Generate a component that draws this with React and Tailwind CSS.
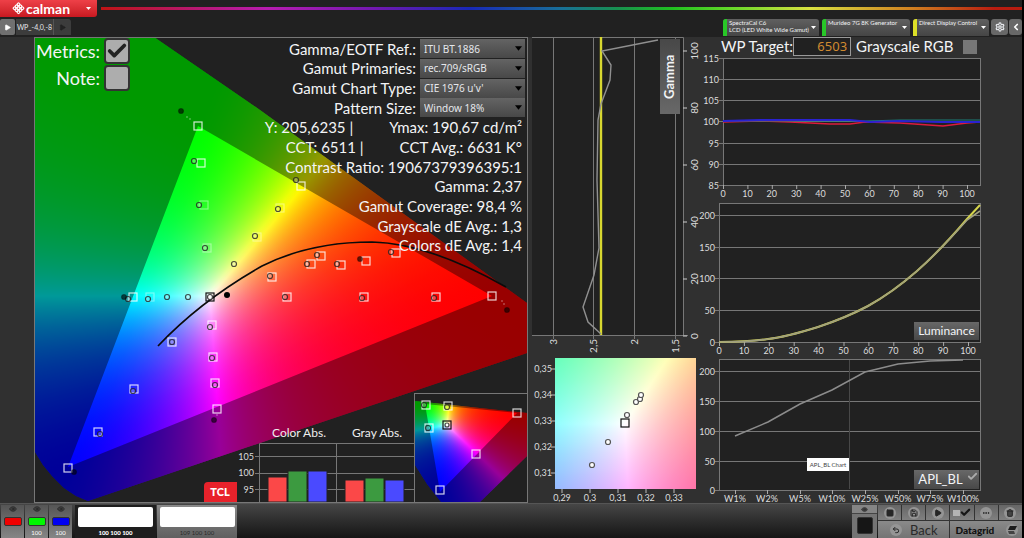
import React, { useState } from "react";
import { Check, ChevronLeft, Eye, MoreHorizontal, Play, Save, Settings, Square, Trash2, Undo2 } from "lucide-react";
import clsx from "clsx";

// signed distance-like value of p from the edge a-b
const side = (p, a, b) => (b[0] - a[0]) * (p[1] - a[1]) - (b[1] - a[1]) * (p[0] - a[0]);

// The ratio of two primaries is constant along every ray that leaves the third one,
// so each pair is a conic gradient and the darkest of the three is the colour.
const conic = (from, a, b, white, box, channels, step) => {
    const stops = [];
    for (let deg = 0; deg <= 360; deg += step) {
        const rad = (deg * Math.PI) / 180;
        const p = [from[0] + Math.sin(rad) * 100, from[1] - Math.cos(rad) * 100];
        const wa = side(p, from, b) / side(white, from, b);
        const wb = side(p, from, a) / side(white, from, a);
        const level = (x, y) => {
            if (x <= 0) return 0;
            if (y <= 0) return 255;
            return Math.round(255 * Math.pow(Math.min(1, x / y), 1.4));
        };
        const rgb = [255, 255, 255];
        rgb[channels[0]] = level(wa, wb);
        rgb[channels[1]] = level(wb, wa);
        stops.push(`rgb(${rgb.join(",")}) ${deg}deg`);
    }
    return `conic-gradient(from 0deg at ${from[0] - box[0]}px ${from[1] - box[1]}px, ${stops.join(",")})`;
};

const ColorField = ({ box, r, g, b, white, outline, step = 1 }) => {
    const background = [
        conic(b, r, g, white, box, [0, 1], step),
        conic(g, r, b, white, box, [0, 2], step),
        conic(r, g, b, white, box, [1, 2], step),
    ].join(",");
    const clipPath = outline
        ? `polygon(${outline.map(([x, y]) => `${x - box[0]}px ${y - box[1]}px`).join(",")})`
        : undefined;
    return (
        <foreignObject x={box[0]} y={box[1]} width={box[2]} height={box[3]}>
            <div className="h-full w-full bg-white" style={{ background, backgroundBlendMode: "darken", clipPath }} />
        </foreignObject>
    );
};

const toPath = (points) => "M" + points.map((p) => p.join(" ")).join("L");

const Squares = ({ points, size = 8, stroke = "#ffffffd0" }) =>
    points.map(([x, y], i) => (
        <rect key={i} x={x - size / 2} y={y - size / 2} width={size} height={size} fill="none" stroke={stroke} strokeWidth="1.2" />
    ));

const Circles = ({ points, r = 2.5, fill = "#ffffff40", stroke = "#222c" }) =>
    points.map(([x, y], i) => <circle key={i} cx={x} cy={y} r={r} fill={fill} stroke={stroke} strokeWidth="1.2" />);

const mainLocus = [
    [35, 37], [154, 37], [260, 110], [473, 264], [527, 303], [527, 353], [88, 501],
    [76, 496], [64, 488], [52, 476], [43, 465], [35, 452],
];
const targets = [
    [198, 126], [201, 163], [133, 297], [301, 186], [321, 256], [311, 264], [341, 265], [366, 261], [396, 253],
    [272, 277], [287, 297], [364, 297], [436, 297], [492, 296], [212, 325], [213, 357], [215, 383], [217, 409],
    [172, 342], [134, 389], [98, 432], [68, 468],
];
const faintTargets = [[204, 205], [207, 248], [280, 208], [150, 297], [257, 237]];
const readings = [
    [194, 161], [199, 205], [205, 248], [255, 236], [234, 264], [278, 209], [296, 180], [317, 255], [307, 264],
    [337, 264], [391, 252], [270, 276], [285, 297], [362, 298], [434, 298], [128, 299], [148, 299], [167, 297],
    [188, 297], [210, 327], [212, 358], [215, 385], [172, 342], [133, 391], [100, 434],
];
const darkReadings = [[181, 111], [360, 259], [507, 310], [124, 297], [214, 420], [74, 472]];

const GamutChart = () => (
    <svg viewBox="34 37 494 466" className="block w-full">
        <rect x="34" y="37" width="494" height="466" fill="#212121" />
        <ColorField box={[35, 38, 492, 464]} r={[492, 296]} g={[198, 126]} b={[68, 467]} white={[210, 296]} outline={mainLocus} />
        <path
            d={`${toPath(mainLocus)}ZM198 126L492 296L68 467Z`}
            fill="#000"
            fillOpacity="0.4"
            fillRule="evenodd"
        />
        <path d="M158 346C190 312 225 287 262 266C300 247 340 242 372 242C415 243 462 262 506 287" fill="none" stroke="#0b0b0b" strokeWidth="1.6" />
        <Squares points={targets} />
        <Squares points={faintTargets} stroke="#ffffff66" />
        <Circles points={readings} />
        <Circles points={darkReadings} fill="#0009" stroke="#0005" />
        <Circles points={[[187, 117], [190, 119], [502, 301], [504, 304], [217, 415]]} r={0.7} fill="#ffffff99" stroke="none" />
        <Squares points={[[210, 297]]} stroke="#111" />
        <Circles points={[[210, 297]]} fill="#fff" stroke="#444" />
        <circle cx="227" cy="295" r="3" fill="#000" />

        {/* dE bars */}
        <path d="M259.5 502V443.5H414.5M336.5 443.5V502M255 456.5H414M255 473.5H414M255 489.5H414" fill="none" stroke="#777" />
        <g fill="#ddd" fontSize="9" textAnchor="end">
            <text x="254" y="460">105</text>
            <text x="254" y="476">100</text>
            <text x="254" y="493">95</text>
        </g>
        <g fill="#eee" fontSize="12" textAnchor="middle">
            <text x="299" y="437">Color Abs.</text>
            <text x="377" y="437">Gray Abs.</text>
        </g>
        {[[268, 477, "#fb4848"], [288, 471, "#3c9a40"], [308, 471, "#4a4aff"], [345, 480, "#fb4848"], [365, 478, "#3c9a40"], [385, 480, "#4a4aff"]].map(
            ([x, y, fill]) => <rect key={x} x={x} y={y} width="19" height={502 - y} fill={fill} stroke="#222" />
        )}

        {/* brand badge */}
        <path d="M208 482H237V502H204V486Q204 482 208 482Z" fill="#e8222b" />
        <text x="220" y="496" fill="#fff" fontSize="11" fontWeight="900" textAnchor="middle">TCL</text>

        {/* small gamut inset */}
        <rect x="414.5" y="393.5" width="113" height="109" fill="#212121" stroke="#777" />
        <ColorField
            box={[415, 394, 112, 108]}
            r={[517, 413]}
            g={[425, 404]}
            b={[440, 492]}
            white={[447, 425]}
            outline={[[415, 401], [527, 413], [527, 456], [480, 502], [441, 502], [427, 484], [415, 465]]}
        />
        <path
            d="M415 401L527 413V456L480 502H441L427 484L415 465ZM425 404L517 413L440 492Z"
            fill="#000"
            fillOpacity="0.4"
            fillRule="evenodd"
        />
        <Squares points={[[426, 405], [448, 406], [429, 428], [517, 413], [476, 454], [440, 490]]} />
        <Circles points={[[424, 405], [447, 407], [428, 428]]} />
        <Squares points={[[447, 425]]} stroke="#111" />
        <Circles points={[[447, 425]]} r={2} fill="#fff" stroke="#444" />
        <rect x="34.5" y="37.5" width="493" height="465" fill="none" stroke="#777" />
    </svg>
);

const GammaChart = () => (
    <svg viewBox="528 37 172 320" className="block w-full">
        <rect x="532" y="37" width="151" height="298" fill="#212121" />
        <path d="M532 37.5H683.5V335M532 335.5H688M553.5 37V339M593.5 37V339M634.5 37V339M675.5 37V339" fill="none" stroke="#777" />
        {[100, 80, 60, 40, 20, 0].map((v, i) => {
            const y = 51 + i * 57;
            return (
                <g key={v}>
                    <path d={`M683 ${y}H687`} stroke="#ccc" />
                    <text transform={`translate(698 ${y}) rotate(-90)`} textAnchor="middle" fontSize="10" fill="#ddd">{v}</text>
                </g>
            );
        })}
        {[["3", 553], ["2,5", 593], ["2", 634], ["1,5", 675]].map(([v, x]) => (
            <text key={v} transform={`translate(${x + 4} 339) rotate(-90)`} textAnchor="end" fontSize="10" fill="#ddd">{v}</text>
        ))}
        <path d="M601 37V335" stroke="#d8d830" strokeWidth="2.4" />
        <path
            d="M658 40L602 51L611 65L610 80L601 104L598 120L597 180L599 248L594 275L583 307L588 322L601 334"
            fill="none"
            stroke="#909090"
            strokeWidth="1.4"
        />
    </svg>
);

const WhitePointChart = () => (
    <svg viewBox="528 357 172 146" className="block w-full">
        <ColorField box={[555, 358, 141, 131]} r={[1553, 420]} g={[591, -281]} b={[167, 1122]} white={[625, 423]} step={0.25} />
        {[["0,35", 369], ["0,34", 395], ["0,33", 421], ["0,32", 447], ["0,31", 473]].map(([v, y]) => (
            <g key={v}>
                <path d={`M551 ${y}H555`} stroke="#bbb" />
                <text x="552" y={y + 3} textAnchor="end" fontSize="9" fill="#ddd">{v}</text>
            </g>
        ))}
        {[["0,29", 562], ["0,3", 590], ["0,31", 618], ["0,32", 646], ["0,33", 674]].map(([v, x]) => (
            <g key={v}>
                <path d={`M${x} 489V493`} stroke="#bbb" />
                <text x={x} y="501" textAnchor="middle" fontSize="9" fill="#ddd">{v}</text>
            </g>
        ))}
        <Circles points={[[592, 465], [608, 442], [627, 415], [636, 402], [640, 399], [641, 395]]} fill="#fff" stroke="#555" />
        <Squares points={[[625, 423]]} stroke="#111" />
    </svg>
);

// plot frame with horizontal grid lines, ticks and both sets of labels
const Plot = ({ viewBox, left, top, bottom, rows, cols, children }) => (
    <svg viewBox={viewBox} className="block w-full overflow-visible">
        <rect x={left + 0.5} y={top + 0.5} width={980 - left} height={bottom - top} fill="#212121" stroke="#777" />
        {rows.map(([v, y]) => (
            <g key={v}>
                <path d={`M${left - 4} ${y + 0.5}H980`} stroke="#777" />
                <text x={left - 4} y={y + 4} textAnchor="end" fontSize="9" fill="#ddd">{v}</text>
            </g>
        ))}
        {cols.map(([v, x]) => (
            <g key={v}>
                <path d={`M${x + 0.5} ${bottom}V${bottom + 4}`} stroke="#aaa" />
                <text x={x} y={bottom + 12} textAnchor="middle" fontSize="9" fill="#ddd">{v}</text>
            </g>
        ))}
        {children}
    </svg>
);

const tens = [0, 10, 20, 30, 40, 50, 60, 70, 80, 90, 100];

const GrayscaleChart = () => (
    <Plot
        viewBox="700 56 322 144"
        left={723}
        top={58}
        bottom={185}
        rows={[[115, 58], [110, 79], [105, 100], [100, 121], [95, 143], [90, 164], [85, 185]]}
        cols={tens.map((v) => [v, 723 + v * 2.44])}
    >
        <path d="M723 122L760 121L790 122L830 124H850L865 122L900 123L943 126L967 123L980 122" fill="none" stroke="#dc1c3c" strokeWidth="1.4" />
        <path d="M723 121H865L900 120H980" fill="none" stroke="#1c8078" strokeWidth="1.2" />
        <path d="M723 121L760 120H850L870 122L900 121L940 122L980 122" fill="none" stroke="#2a22d0" strokeWidth="1.8" />
    </Plot>
);

const LuminanceChart = () => (
    <Plot
        viewBox="700 200 322 157"
        left={719}
        top={203}
        bottom={342}
        rows={[[200, 215], [150, 247], [100, 278], [50, 310], [0, 342]]}
        cols={tens.map((v) => [v, 719 + v * 2.49])}
    >
        <path
            d="M719 342C735 342 755 341 768 339C786 337 802 332 818 327C836 321 853 314 868 306C886 296 901 285 917 271C934 256 950 239 967 219L980 205"
            fill="none"
            stroke="#d4d44c"
            strokeWidth="2"
        />
        <path
            d="M719 342C735 342 755 341 768 339C786 337 802 332 818 327C836 321 853 314 868 306C886 296 901 285 917 271C934 256 950 239 967 220L980 211"
            fill="none"
            stroke="#a0a080"
            strokeWidth="1.6"
        />
    </Plot>
);

const AplChart = () => (
    <Plot
        viewBox="700 357 322 146"
        left={719}
        top={359}
        bottom={490}
        rows={[[200, 371], [150, 401], [100, 431], [50, 461], [0, 490]]}
        cols={[["W1%", 735], ["W2%", 767], ["W5%", 800], ["W10%", 832], ["W25%", 865], ["W50%", 898], ["W75%", 930], ["W100%", 963]]}
    >
        <path d="M849.5 360V489" stroke="#484848" />
        <path d="M735 436L768 422L800 404L832 390L865 372L898 364L930 361L963 360" fill="none" stroke="#8c8c8c" strokeWidth="1.5" />
    </Plot>
);

const settings = [
    ["Gamma/EOTF Ref.:", "ITU BT.1886"],
    ["Gamut Primaries:", "rec.709/sRGB"],
    ["Gamut Chart Type:", "CIE 1976 u'v'"],
    ["Pattern Size:", "Window 18%"],
];

const metrics = [
    ["Y: 205,6235 |", "Ymax: 190,67 cd/m²"],
    ["CCT: 6511 |", "CCT Avg.: 6631 K°"],
    ["Contrast Ratio: 19067379396395:1"],
    ["Gamma: 2,37"],
    ["Gamut Coverage: 98,4 %"],
    ["Grayscale dE Avg.: 1,3"],
    ["Colors dE Avg.: 1,4"],
];

const Caret = ({ className }) => (
    <svg viewBox="0 0 8 5" className={clsx("pointer-events-none h-[5px]", className)}>
        <path d="M0 0H8L4 5Z" fill="currentColor" />
    </svg>
);

const SettingsPanel = () => (
    <div className="absolute top-[2px] right-[3px] grid h-[216px] auto-rows-fr text-[15px] text-gray-100">
        {settings.map(([label, value]) => (
            <label key={label} className="flex items-center justify-end gap-1 leading-[18px]">
                {label}
                <span className="relative block h-[19px] w-[105px]">
                    <select className="block h-full w-full appearance-none bg-linear-to-b from-[#646464] to-[#484848] px-1 font-['Noto_Sans',sans-serif] text-[10px] text-gray-200">
                        <option>{value}</option>
                    </select>
                    <Caret className="absolute top-[7px] right-[3px] w-[7px] text-black" />
                </span>
            </label>
        ))}
        {metrics.map((row) => (
            <p key={row[0]} className="flex items-center justify-end gap-9 pr-[3px] leading-[18px] whitespace-nowrap">
                {row.map((text) => (
                    <span key={text}>{text}</span>
                ))}
            </p>
        ))}
    </div>
);

const CheckField = ({ label, checked, onChange }) => (
    <label className="flex items-center justify-end gap-1 text-[18px] leading-[24px] text-gray-100">
        {label}
        <span className="relative block size-[26px]">
            <input
                type="checkbox"
                checked={checked}
                onChange={onChange}
                className="block size-full appearance-none rounded-[4px] border-2 border-[#333] bg-[#adadad]"
            />
            {checked && <Check className="pointer-events-none absolute top-[2px] left-[2px] size-[22px] text-[#222]" strokeWidth={4} />}
        </span>
    </label>
);

const DeviceTab = ({ lines, bar, className }) => (
    <button className={clsx("flex h-[17px] items-stretch overflow-hidden rounded-t-[3px] bg-linear-to-b from-[#606060] to-[#454545] text-left", className)}>
        <span className={clsx("w-[4px]", bar)} />
        <span className="flex-1 pl-[2px] text-[6px] leading-[7px] whitespace-nowrap text-gray-100">
            {lines.map((line) => (
                <span key={line} className="block">{line}</span>
            ))}
        </span>
        <span className="mr-[3px] flex items-center">
            <Caret className="w-[5px] text-white" />
        </span>
    </button>
);

const Header = () => (
    <header className="bg-[#212121]">
        <div className="flex h-[17px] items-center gap-1">
            <button className="flex h-full w-[97px] items-center rounded-br-[3px] bg-linear-to-b from-[#ee4048] to-[#c81820] pl-3 text-white">
                <svg viewBox="0 0 14 14" className="size-[13px]">
                    <g transform="rotate(45 7 7)" fill="none" stroke="#fff" strokeWidth="1.2">
                        {[3, 6, 9].map((x) => [3, 6, 9].map((y) => <rect key={`${x}-${y}`} x={x - 0.5} y={y - 0.5} width="2.6" height="2.6" rx="0.8" />))}
                    </g>
                </svg>
                <span className="ml-px text-[14px] leading-[15px] font-bold">calman</span>
                <Caret className="ml-auto mr-[6px] w-[5px]" />
            </button>
            <div className="h-[3px] flex-1 bg-[linear-gradient(to_right,#c01414_0%,#b81870_10%,#b81cb0_18%,#7018b0_30%,#1828b8_40%,#187098_50%,#189050_56%,#20c020_62%,#60d828_68%,#d8e040_77%,#d08020_88%,#b81c10_97%)]" />
        </div>
        <div className="flex h-[20px] items-start pt-[2px]">
            <button aria-label="Layouts" className="flex h-[16px] w-[15px] items-center justify-center rounded-[2px] bg-[#707070]">
                <Play className="size-[7px] fill-white text-white" />
            </button>
            <button className="ml-px h-[16px] w-[38px] border-r border-[#555] bg-[#3c3c3c] text-[7px] text-gray-200">WP_-4,0,-8</button>
            <button aria-label="Next layout" className="flex h-[16px] w-[17px] items-center justify-center rounded-tr-[3px] bg-[#3c3c3c]">
                <Play className="size-[7px] fill-[#222] text-[#222]" />
            </button>
            <div className="ml-auto flex gap-[3px]">
                <DeviceTab className="w-[96px]" bar="bg-[#28c828]" lines={["SpectraCal C6", "LCD (LED White Wide Gamut)"]} />
                <DeviceTab className="w-[88px]" bar="bg-[#28c828]" lines={["Murideo 7G 8K Generator"]} />
                <DeviceTab className="w-[76px]" bar="bg-[#dce028]" lines={["Direct Display Control"]} />
            </div>
            <div className="ml-[2px] flex gap-px">
                <button aria-label="Settings" className="flex h-[16px] w-[17px] items-center justify-center rounded-[3px] bg-[#686868]">
                    <Settings className="size-[10px] text-gray-200" strokeWidth={3} />
                </button>
                <button aria-label="Collapse" className="flex h-[16px] w-[13px] items-center justify-center rounded-[3px] bg-[#686868]">
                    <ChevronLeft className="size-[10px] text-white" strokeWidth={4} />
                </button>
            </div>
        </div>
    </header>
);

const Swatch = ({ color, label }) => (
    <button className="flex h-[33px] w-[23px] flex-col items-center bg-linear-to-b from-[#555] to-[#868686]">
        <Eye className="size-[8px] fill-[#444] text-[#222]" />
        <span className={clsx("mt-[4px] h-[9px] w-[18px] rounded-[2px] border border-[#333]", color)} />
        <span className="mt-[3px] text-[6px] leading-[8px] text-white">{label}</span>
    </button>
);

const RoundIcon = ({ icon: Icon, className }) => (
    <span className="flex size-[12px] items-center justify-center rounded-full bg-[#959595]">
        <Icon className={clsx("size-[8px] text-[#262626]", className)} strokeWidth={3} />
    </span>
);

const ToolButton = ({ icon, label, className }) => (
    <button aria-label={label} className="flex h-[15px] items-center justify-center bg-linear-to-b from-[#666] to-[#808080]">
        <RoundIcon icon={icon} className={className} />
    </button>
);

const Footer = () => (
    <footer className="flex h-[35px] items-end border-t border-[#555] bg-linear-to-b from-[#464646] to-[#161616]">
        <div className="ml-px flex gap-px">
            <Swatch color="bg-[#f00000]" label="" />
            <Swatch color="bg-[#00f800]" label="100" />
            <Swatch color="bg-[#0000f0]" label="100" />
        </div>
        <button className="ml-[3px] flex h-[33px] w-[81px] flex-col items-center bg-[#1e1e1e] pt-[2px]">
            <span className="h-[20px] w-[75px] rounded-[2px] bg-white" />
            <span className="mt-[2px] text-[6px] leading-[8px] font-black text-white">100 100 100</span>
        </button>
        <button className="ml-px flex h-[33px] w-[80px] flex-col items-center bg-linear-to-b from-[#8a8a8a] to-[#606060] pt-[2px]">
            <span className="h-[20px] w-[75px] rounded-[2px] bg-white" />
            <span className="mt-[2px] text-[6px] leading-[8px] text-[#2a2a2a]">109 100 100</span>
        </button>
        <div className="ml-auto flex gap-px">
            <div className="w-[25px] bg-[#747474]">
                <button aria-label="Show pattern" className="flex h-[9px] w-full items-center justify-center border-b border-[#444] bg-[#858585]">
                    <Eye className="size-[7px] fill-[#444] text-[#333]" />
                </button>
                <div className="mx-auto mt-[3px] mb-[4px] h-[17px] w-[16px] rounded-[2px] border border-[#333] bg-[#161616]" />
            </div>
            <div className="grid w-[144px] grid-cols-6 gap-px bg-[#333]">
                <ToolButton icon={Square} label="Stop" className="size-[5px] fill-[#262626]" />
                <ToolButton icon={Save} label="Save" />
                <ToolButton icon={Play} label="Play" className="fill-[#262626]" />
                <button aria-label="Confirm" className="flex h-[15px] items-center justify-center bg-linear-to-b from-[#666] to-[#808080]">
                    <span className="h-[6px] w-[7px] bg-[#b4b4b4]" />
                    <Check className="size-[11px] text-[#161616]" strokeWidth={5} />
                </button>
                <ToolButton icon={MoreHorizontal} label="More" />
                <ToolButton icon={Trash2} label="Delete" className="fill-[#444]" />
                <button className="col-span-3 flex h-[17px] items-center justify-center gap-2 bg-linear-to-b from-[#8a8a8a] to-[#747474] text-[13px] leading-[16px] text-[#2a2a2a]">
                    <RoundIcon icon={Undo2} />
                    Back
                </button>
                <button className="col-span-3 flex h-[17px] items-center justify-between bg-linear-to-b from-[#8a8a8a] to-[#747474] pr-1 pl-[5px] text-[10px] leading-[16px] font-black text-[#111]">
                    Datagrid
                    <span className="flex size-[12px] items-center justify-center rounded-full bg-[#959595]">
                        <svg viewBox="0 0 10 8" className="h-[8px] w-[10px]">
                            <path d="M3 0H10L8 4H1Z" fill="#1c1c1c" />
                            <path d="M1 5H7L8 8H2Z" fill="#444" />
                        </svg>
                    </span>
                </button>
            </div>
        </div>
    </footer>
);

const chartButton = "absolute flex items-center justify-center bg-linear-to-b from-[#686868] to-[#484848] text-gray-100";

const App = () => {
    const [showMetrics, setShowMetrics] = useState(true);
    const [showNote, setShowNote] = useState(false);

    return (
        <div className="min-h-screen border-r-2 border-black bg-[#303030] font-['Lato',sans-serif]">
            <Header />
            <main className="grid grid-cols-[34fr_494fr_172fr_322fr]">
                <div />
                <section className="relative">
                    <GamutChart />
                    <div className="absolute top-[1px] left-[2px] grid gap-px">
                        <CheckField label="Metrics:" checked={showMetrics} onChange={() => setShowMetrics(!showMetrics)} />
                        <CheckField label="Note:" checked={showNote} onChange={() => setShowNote(!showNote)} />
                    </div>
                    <SettingsPanel />
                </section>
                <section>
                    <div className="relative">
                        <GammaChart />
                        <button className={clsx(chartButton, "top-[2px] right-[20px] h-[75px] w-[20px] rotate-180 text-[13px] font-bold [writing-mode:vertical-rl]")}>
                            Gamma
                        </button>
                    </div>
                    <WhitePointChart />
                </section>
                <section>
                    <form className="flex h-[19px] items-center pl-[21px] text-[15px] text-gray-100">
                        <label htmlFor="wp-target" className="whitespace-nowrap">WP Target:</label>
                        <input
                            id="wp-target"
                            defaultValue="6503"
                            className="h-[19px] w-[58px] border border-[#999] bg-[#212121] pr-[3px] text-right font-['Noto_Sans',sans-serif] text-[13px] text-[#d08a30]"
                        />
                        <label htmlFor="grayscale-rgb" className="ml-[5px] whitespace-nowrap">Grayscale RGB</label>
                        <input id="grayscale-rgb" type="checkbox" className="ml-[9px] size-[14px] appearance-none bg-[#777]" />
                    </form>
                    <GrayscaleChart />
                    <div className="relative">
                        <LuminanceChart />
                        <button className={clsx(chartButton, "right-[43px] bottom-[17px] h-[18px] w-[65px] text-[12px]")}>Luminance</button>
                    </div>
                    <div className="relative">
                        <AplChart />
                        <span role="tooltip" className="absolute top-[101px] left-[107px] h-[13px] w-[42px] bg-white text-center text-[6px] leading-[13px] text-[#444]">
                            APL_BL Chart
                        </span>
                        <button className={clsx(chartButton, "right-[43px] bottom-[14px] h-[19px] w-[65px] pr-3 text-[13px]")}>
                            APL_BL
                            <Check className="absolute top-px right-px size-[11px] text-[#aaa]" strokeWidth={4} />
                        </button>
                    </div>
                </section>
            </main>
            <Footer />
        </div>
    );
};

export default App;
